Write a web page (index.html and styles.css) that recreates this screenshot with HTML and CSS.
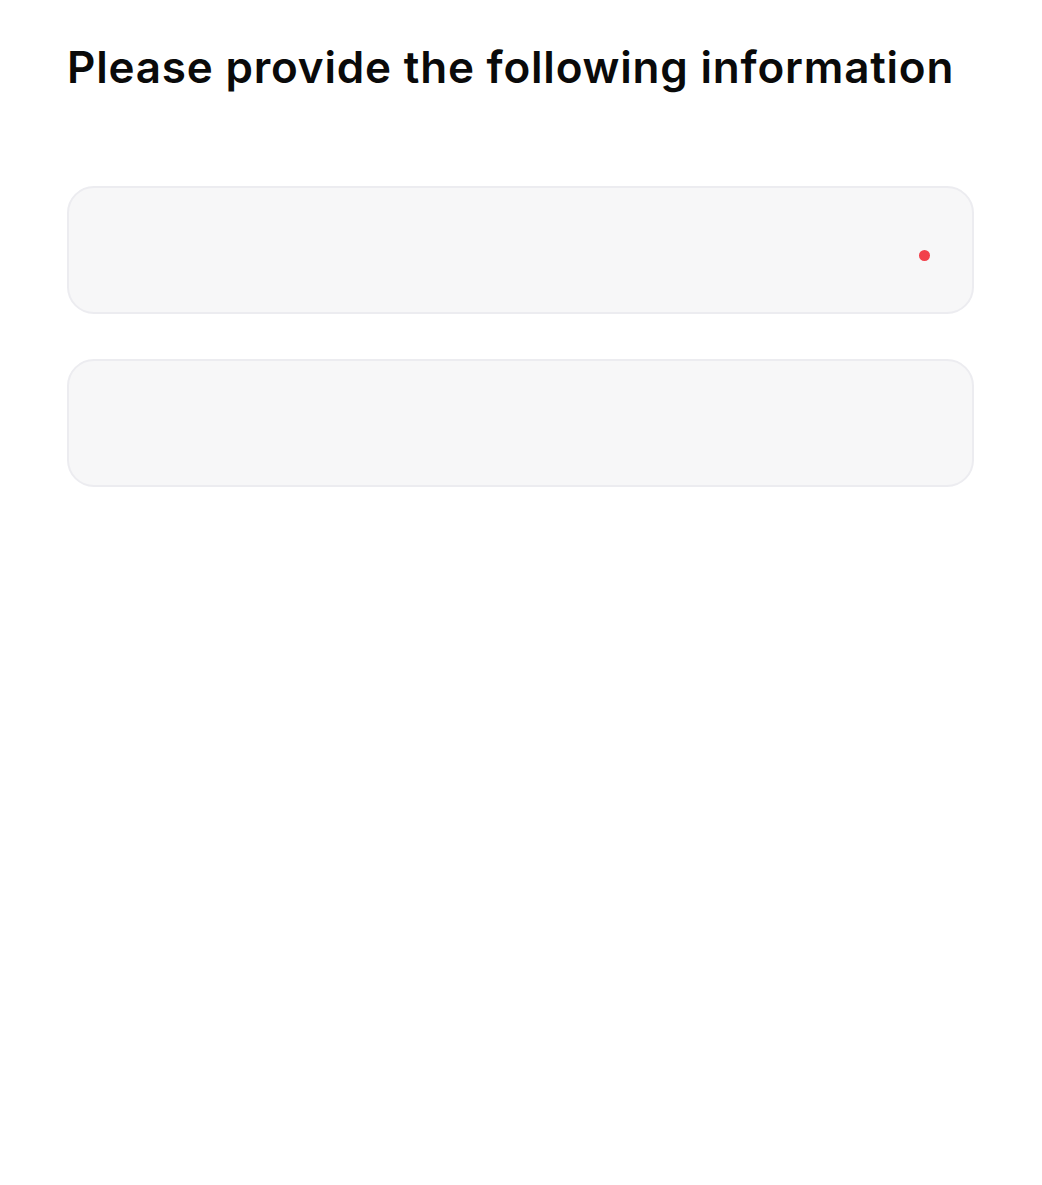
FILE: index.html
```html
<!DOCTYPE html>
<html lang="en">
<head>
<meta charset="utf-8">
<link rel="stylesheet" href="styles.css">
</head>
<body>
<main class="page">
  <h1 class="title">Please provide the following information</h1>
  <div class="fields">
    <div class="field">
      <span class="required-dot"></span>
    </div>
    <div class="field"></div>
  </div>
</main>
</body>
</html>
```
FILE: styles.css
```css
html, body {
  margin: 0;
  padding: 0;
  background: #ffffff;
}
body {
  font-family: Inter, "Noto Sans", "Liberation Sans", sans-serif;
  color: #0a0a0a;
}
.page {
  padding: 40px 68px 0 67px;
}
.title {
  margin: 0;
  font-size: 44px;
  font-weight: 600;
  line-height: 54px;
  letter-spacing: 0.8px;
  white-space: nowrap;
}
.fields {
  margin-top: 92px;
  display: flex;
  flex-direction: column;
  gap: 45px;
}
.field {
  box-sizing: border-box;
  height: 128px;
  border: 2px solid #ececf0;
  border-radius: 27px;
  background: #f7f7f8;
  display: flex;
  align-items: center;
  justify-content: flex-end;
  padding-right: 42px;
}
.required-dot {
  width: 11px;
  height: 11px;
  border-radius: 50%;
  background: #f2404b;
  margin-top: 10px;
}
```
